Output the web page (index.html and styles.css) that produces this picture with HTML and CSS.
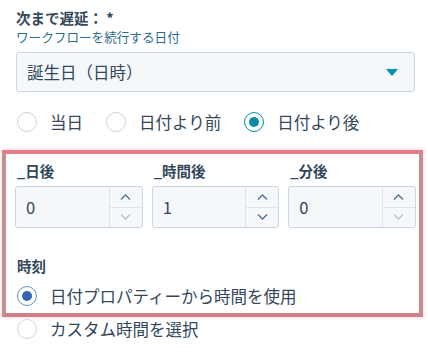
FILE: index.html
```html
<!DOCTYPE html>
<html lang="ja">
<head>
  <meta charset="UTF-8">
  <title>次まで遅延</title>
  <link rel="stylesheet" href="styles.css">
</head>
<body>

<div class="panel">
  <!-- 遅延の基準日 -->
  <div class="field-head">
    <div class="label">次まで遅延： *</div>
    <div class="help">ワークフローを続行する日付</div>
  </div>
  <div class="select">
    <span>誕生日（日時）</span>
    <svg class="caret" width="12" height="7" viewBox="0 0 12 7"><path d="M0 0h12L6 7z" fill="#0091ae"/></svg>
  </div>

  <div class="radios">
    <label class="radio"><span class="dot"></span>当日</label>
    <label class="radio"><span class="dot"></span>日付より前</label>
    <label class="radio"><span class="dot is-on"></span>日付より後</label>
  </div>

  <!-- ハイライト部分 -->
  <div class="highlight">
    <div class="numbers">
      <div class="num">
        <div class="label">_日後</div>
        <div class="num-input">
          <span class="value">0</span>
          <div class="spin">
            <span class="up"><svg width="11" height="6" viewBox="0 0 11 6"><path d="M1 5.5l4.5-4.5 4.5 4.5" fill="none" stroke="#516f90" stroke-width="1.3"/></svg></span>
            <span class="down"><svg width="11" height="6" viewBox="0 0 11 6"><path d="M1 .5l4.5 4.5 4.5-4.5" fill="none" stroke="#b0c1d4" stroke-width="1.3"/></svg></span>
          </div>
        </div>
      </div>
      <div class="num">
        <div class="label">_時間後</div>
        <div class="num-input">
          <span class="value">1</span>
          <div class="spin">
            <span class="up"><svg width="11" height="6" viewBox="0 0 11 6"><path d="M1 5.5l4.5-4.5 4.5 4.5" fill="none" stroke="#516f90" stroke-width="1.3"/></svg></span>
            <span class="down"><svg width="11" height="6" viewBox="0 0 11 6"><path d="M1 .5l4.5 4.5 4.5-4.5" fill="none" stroke="#516f90" stroke-width="1.3"/></svg></span>
          </div>
        </div>
      </div>
      <div class="num">
        <div class="label">_分後</div>
        <div class="num-input">
          <span class="value">0</span>
          <div class="spin">
            <span class="up"><svg width="11" height="6" viewBox="0 0 11 6"><path d="M1 5.5l4.5-4.5 4.5 4.5" fill="none" stroke="#516f90" stroke-width="1.3"/></svg></span>
            <span class="down"><svg width="11" height="6" viewBox="0 0 11 6"><path d="M1 .5l4.5 4.5 4.5-4.5" fill="none" stroke="#b0c1d4" stroke-width="1.3"/></svg></span>
          </div>
        </div>
      </div>
    </div>

    <div class="label time-label">時刻</div>
    <label class="radio"><span class="dot is-on blue"></span>日付プロパティーから時間を使用</label>
  </div>

  <label class="radio last"><span class="dot"></span>カスタム時間を選択</label>
</div>

</body>
</html>
```

FILE: styles.css
```css
body {
  margin: 0;
  background: #fff;
  color: #33475b;
  font-family: 'Noto Sans CJK JP', 'Noto Sans', sans-serif;
}
.panel {
  width: 428px;
  height: 357px;
  overflow: hidden;
}
.field-head {
  padding: 9px 0 0 16px;
}
.label {
  font-size: 14.5px;
  font-weight: bold;
  line-height: 18px;
}
.help {
  margin-top: 2px;
  font-size: 12.6px;
  line-height: 16px;
  color: #2c6a8e;
}
.select {
  margin: 7px 13px 0 16px;
  height: 40px;
  box-sizing: border-box;
  border: 1px solid #cbd6e2;
  border-radius: 3px;
  background: #f5f8fa;
  display: flex;
  align-items: center;
  justify-content: space-between;
  padding: 0 16px 0 10px;
  font-size: 16.5px;
}
.caret {
  margin-top: 1px;
}
.radios {
  display: flex;
  gap: 23px;
  padding: 20px 0 0 17px;
  height: 20px;
}
.radio {
  display: flex;
  align-items: center;
  gap: 13px;
  font-size: 16.5px;
  line-height: 20px;
  height: 20px;
}
.dot {
  width: 20px;
  height: 20px;
  box-sizing: border-box;
  border: 1px solid #cbd6e2;
  border-radius: 50%;
  background: #fff;
  position: relative;
}
.dot.is-on {
  border: 1.5px solid #0091ae;
}
.dot.is-on::after {
  content: '';
  position: absolute;
  left: 3.5px;
  top: 3.5px;
  width: 10px;
  height: 10px;
  border-radius: 50%;
  background: #0b8aa8;
}
.dot.blue {
  border-color: #5b93c7;
}
.dot.blue::after {
  background: #3165ad;
}

/* ハイライト枠 */
.highlight {
  margin: 18px 0 0 2px;
  width: 421px;
  height: 167px;
  box-sizing: border-box;
  border: 4px solid #c4918a;
  border-top-color: #e87b88;
  border-bottom-color: #d17f88;
  box-shadow: 0 0 3px 1px #fbd9ee;
  padding: 8px 3px 0 9px;
  background: #fff;
}
.numbers {
  display: grid;
  grid-template-columns: repeat(3, 1fr);
  gap: 9px;
}
.num .label {
  padding-left: 2px;
}
.num-input {
  margin-top: 6px;
  height: 42px;
  box-sizing: border-box;
  border: 1px solid #cbd6e2;
  border-radius: 3px;
  background: #f5f8fa;
  display: flex;
}
.value {
  flex: 1;
  padding-left: 10px;
  font-size: 16.5px;
  line-height: 40px;
}
.spin {
  width: 32px;
  border-left: 1px solid #dfe3eb;
  display: flex;
  flex-direction: column;
}
.spin span {
  flex: 1;
  display: flex;
  align-items: center;
  justify-content: center;
}
.spin .up {
  border-bottom: 1px solid #dfe3eb;
}
.time-label {
  margin: 29px 0 0 2px;
}
.highlight .radio {
  margin: 11px 0 0 2px;
}
.radio.last {
  margin: 2px 0 0 17px;
}
```
